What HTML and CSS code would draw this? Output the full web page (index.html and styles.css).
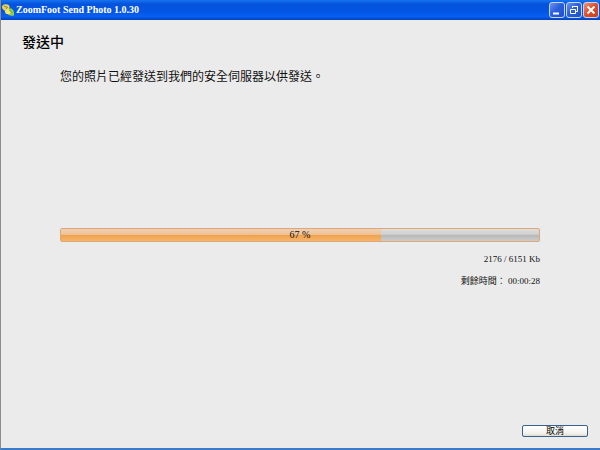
FILE: index.html
```
<!DOCTYPE html>
<html lang="zh-Hant">
<head>
<meta charset="utf-8">
<title>ZoomFoot Send Photo 1.0.30</title>
<link rel="stylesheet" href="styles.css">
</head>
<body>
<div class="window">
  <header class="titlebar">
    <svg class="app-icon" viewBox="0 0 13 14" aria-hidden="true">
      <path d="M0 3Q1 0 6 1Q9 2 8 5Q7 8 4 8Q0 7 0 3Z" fill="#ead65c"/>
      <path d="M2 3L6 4L4 6" fill="none" stroke="#8a7a24" stroke-width="1"/>
      <path d="M6 7Q8 4 11 6Q14 9 13 13Q9 14 7 12Q5 9 6 7Z" fill="#8fd04e"/>
      <path d="M3 8L7 6L10 9L8 12L4 11Z" fill="#f3e66b"/>
      <path d="M8 7L11 10" stroke="#3f8b3c" stroke-width="1"/>
    </svg>
    <span class="title">ZoomFoot Send Photo 1.0.30</span>
    <div class="controls">
      <button class="control" type="button" aria-label="Minimize">
        <svg viewBox="0 0 14 14"><path d="M3 10.5H9" stroke="#fff" stroke-width="2"/></svg>
      </button>
      <button class="control" type="button" aria-label="Restore">
        <svg viewBox="0 0 14 14" fill="none" stroke="#fff"><path d="M5.5 5V3.5H10.5V8.5H9M5 3.5H11M3.5 6.5H8.5V10.5H3.5Z"/></svg>
      </button>
      <button class="control close" type="button" aria-label="Close">
        <svg viewBox="0 0 14 14"><path d="M3.5 3.5L10.5 10.5M10.5 3.5L3.5 10.5" stroke="#fff" stroke-width="2"/></svg>
      </button>
    </div>
  </header>
  <main class="content">
    <h1 class="heading">發送中</h1>
    <p class="message">您的照片已經發送到我們的安全伺服器以供發送。</p>
    <section class="status">
      <div class="progress" role="progressbar" aria-label="發送中" aria-valuenow="67" aria-valuemin="0" aria-valuemax="100">
        <div class="fill" style="width: 67%"></div>
        <span class="percent">67 %</span>
      </div>
      <p class="detail">2176 / 6151 Kb</p>
      <p class="detail">剩餘時間： 00:00:28</p>
    </section>
  </main>
  <footer class="actions">
    <button class="cancel" type="button">取消</button>
  </footer>
</div>
</body>
</html>
```
FILE: styles.css
```
* {
  box-sizing: border-box;
}

body {
  margin: 0;
  font-family: "Liberation Serif", "Noto Sans CJK TC", serif;
  color: #111;
}

.window {
  display: flex;
  flex-direction: column;
  min-height: 100vh;
  background: #ebebeb;
  border-left: 1px solid #8b8b8b;
  border-bottom: 2px solid #3b7bc8;
}

.titlebar {
  display: flex;
  align-items: center;
  gap: 2px;
  height: 20px;
  padding: 0 1px;
  background: linear-gradient(#1674f0, #0553dc 20%, #0455e4 60%, #0660f4 82%, #0440b8);
}

.app-icon {
  width: 12px;
  height: 14px;
}

.title {
  flex: 1;
  color: #fff;
  font-size: 10px;
  font-weight: bold;
  line-height: 18px;
  white-space: nowrap;
}

.controls {
  display: flex;
  gap: 1px;
}

.control {
  width: 16px;
  height: 16px;
  padding: 0;
  border: 1px solid #c4d6fa;
  border-radius: 3px;
  background: linear-gradient(135deg, #6c94ee, #2c5fdc 45%, #1f50cc);
}

.control svg {
  display: block;
  width: 14px;
  height: 14px;
}

.close {
  background: linear-gradient(135deg, #f09478, #e0502c 45%, #c83c18);
}

.content {
  flex: 1;
  padding: 13px 60px 0 59px;
}

.heading {
  margin: 0 0 14px -38px;
  color: #000;
  font-size: 14px;
  font-weight: 500;
  line-height: 20px;
}

.message {
  margin: 0;
  font-size: 12px;
  line-height: 20px;
}

.status {
  margin-top: 141px;
}

.progress {
  position: relative;
  height: 14px;
  margin-bottom: 8px;
  border: 1px solid #dfa777;
  border-radius: 2px;
  background: linear-gradient(#dedede, #cfcfcf 45%, #b7b7b7 50%, #cccccc);
  overflow: hidden;
}

.fill {
  height: 100%;
  background: linear-gradient(#edcfb4, #efc498 45%, #eea04e 50%, #f5b56a);
}

.percent {
  position: absolute;
  inset: 0;
  font-size: 10px;
  line-height: 12px;
  text-align: center;
}

.detail {
  margin: 0 0 4px;
  font-size: 9px;
  line-height: 18px;
  text-align: right;
}

.actions {
  display: flex;
  justify-content: flex-end;
  padding: 0 12px 11px;
}

.cancel {
  width: 66px;
  height: 12px;
  padding: 0;
  border: 1px solid #39618c;
  border-radius: 2px;
  background: linear-gradient(#fff, #f3f3ef 70%, #dcdad0);
  color: #000;
  font: 9px/10px "Liberation Serif", "Noto Sans CJK TC", serif;
}
```
